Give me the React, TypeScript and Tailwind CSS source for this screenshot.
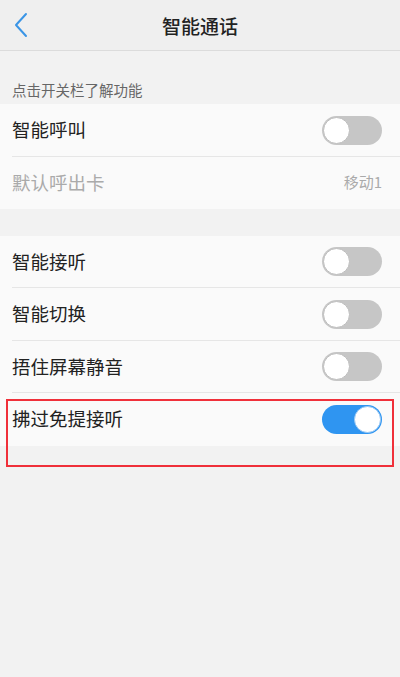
import React from "react";

const font = { fontFamily: '"Noto Sans CJK SC", "Noto Sans", sans-serif' };

function Toggle({ on }: { on?: boolean }) {
  return on ? (
    <div className="w-[60px] h-[29px] rounded-full bg-[#2f95f1] flex items-center justify-end p-[1px]">
      <div className="w-[27px] h-[27px] rounded-full bg-white border border-[#9cc9f3]" />
    </div>
  ) : (
    <div className="w-[60px] h-[29px] rounded-full bg-[#c6c6c6] flex items-center justify-start p-[1px]">
      <div className="w-[27px] h-[27px] rounded-full bg-white border border-[#bdbdbd]" />
    </div>
  );
}

function Row({ label, on, divider = true }: { label: string; on?: boolean; divider?: boolean }) {
  return (
    <div className="relative h-[52.5px] flex items-center justify-between pl-[12px] pr-[18px] bg-[#fafafa]">
      <span className="text-[18.5px] text-[#222]">{label}</span>
      <Toggle on={on} />
      {divider && <div className="absolute left-[12px] right-0 bottom-0 h-px bg-[#e6e6e6]" />}
    </div>
  );
}

export default function App() {
  return (
    <div className="relative w-[400px] h-[677px] bg-[#f2f2f2] overflow-hidden" style={font}>
      <div className="h-[51px] bg-[#efefef] border-b border-[#dcdcdc] flex items-center justify-center relative">
        <svg className="absolute left-[13px] top-[12px]" width="16" height="26" viewBox="0 0 16 26">
          <path d="M13 2 L3 13 L13 24" fill="none" stroke="#3a95e6" strokeWidth="2" strokeLinecap="round" strokeLinejoin="round" />
        </svg>
        <span className="text-[19px] font-medium text-[#222] leading-none">智能通话</span>
      </div>
      <div className="h-[53px] flex items-end pl-[12px] pb-[4px]">
        <span className="text-[14.5px] text-[#666] leading-[20px]">点击开关栏了解功能</span>
      </div>
      <div>
        <Row label="智能呼叫" />
        <div className="h-[52px] flex items-center justify-between pl-[12px] pr-[18px] bg-[#fafafa]">
          <span className="text-[18.5px] text-[#aaa]">默认呼出卡</span>
          <span className="text-[15px] text-[#aaa]">移动1</span>
        </div>
      </div>
      <div className="h-[27px]" />
      <div>
        <Row label="智能接听" />
        <Row label="智能切换" />
        <Row label="捂住屏幕静音" />
        <Row label="拂过免提接听" on divider={false} />
      </div>
      <div className="absolute left-[6px] top-[399px] w-[388px] h-[68px] border-2 border-[#f0303a]" />
    </div>
  );
}
